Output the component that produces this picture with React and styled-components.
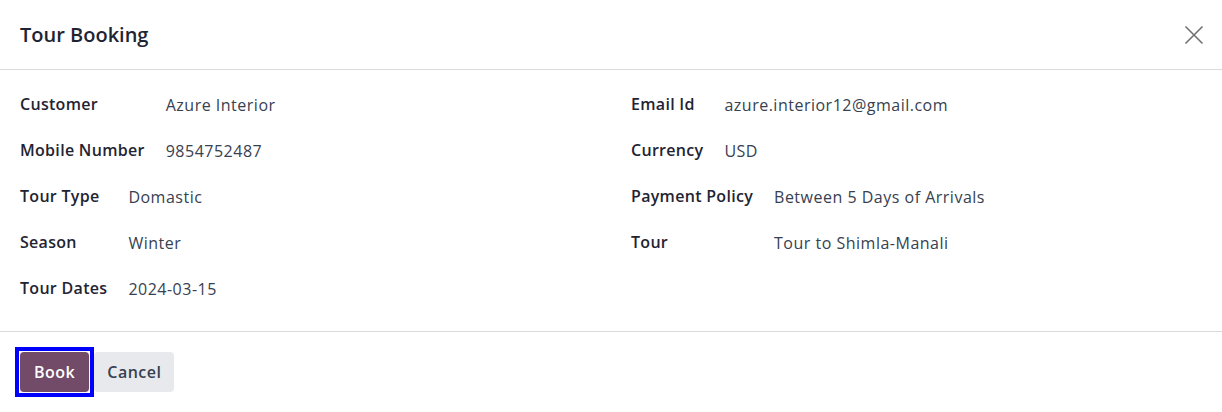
import React from "react";
import styled, { createGlobalStyle } from "styled-components";

const GlobalStyle = createGlobalStyle`
  html, body {
    margin: 0;
    padding: 0;
    background: #ffffff;
    font-family: "Open Sans", "Noto Sans", sans-serif;
  }
`;

const Dialog = styled.div`
  width: 1222px;
  height: 412px;
  background: #ffffff;
  display: flex;
  flex-direction: column;
  color: #111827;
`;

const Header = styled.div`
  height: 70px;
  box-sizing: border-box;
  padding: 0 16px 0 20px;
  display: flex;
  align-items: center;
  justify-content: space-between;
  border-bottom: 1px solid #d8dadd;
`;

const Title = styled.h4`
  margin: 0;
  font-size: 20px;
  font-weight: 600;
  color: #1f2433;
`;

const CloseBtn = styled.button`
  border: none;
  background: transparent;
  padding: 0;
  width: 24px;
  height: 24px;
  display: flex;
  align-items: center;
  justify-content: center;
  cursor: pointer;
`;

const Body = styled.div`
  flex: 1;
  display: grid;
  grid-template-columns: 1fr 1fr;
  column-gap: 20px;
  padding: 23px 0 0 20px;
  border-bottom: 1px solid #d8dadd;
`;

const Column = styled.div`
  display: flex;
  flex-direction: column;
`;

const Group = styled.div`
  display: grid;
  grid-template-columns: max-content 1fr;
  column-gap: 21px;
  grid-auto-rows: 46px;
`;

const Label = styled.div`
  font-size: 16px;
  font-weight: 600;
  letter-spacing: 0.3px;
  line-height: 22px;
  color: #1f2433;
`;

const Value = styled.div`
  font-size: 16px;
  letter-spacing: 0.5px;
  line-height: 22px;
  padding-top: 1px;
  color: #374151;
`;

const Footer = styled.div`
  height: 80px;
  box-sizing: border-box;
  padding: 0 15px;
  display: flex;
  align-items: center;
  gap: 0;
`;

const FocusRing = styled.span`
  display: inline-flex;
  border: 4px solid #0000ff;
  padding: 1px;
`;

const Button = styled.button`
  height: 40px;
  padding: 0 ${(p) => (p.$primary ? "14px" : "13px")};
  border: none;
  border-radius: 4px;
  font-family: inherit;
  font-size: 16px;
  font-weight: 600;
  letter-spacing: 0.5px;
  cursor: pointer;
  background: ${(p) => (p.$primary ? "#714b67" : "#e7e9ed")};
  color: ${(p) => (p.$primary ? "#ffffff" : "#374151")};
`;

const left = [
  [
    ["Customer", "Azure Interior"],
    ["Mobile Number", "9854752487"],
  ],
  [
    ["Tour Type", "Domastic"],
    ["Season", "Winter"],
    ["Tour Dates", "2024-03-15"],
  ],
];

const right = [
  [
    ["Email Id", "azure.interior12@gmail.com"],
    ["Currency", "USD"],
  ],
  [
    ["Payment Policy", "Between 5 Days of Arrivals"],
    ["Tour", "Tour to Shimla-Manali"],
  ],
];

function FieldColumn({ groups }) {
  return (
    <Column>
      {groups.map((rows, i) => (
        <Group key={i}>
          {rows.map(([label, value]) => (
            <React.Fragment key={label}>
              <Label>{label}</Label>
              <Value>{value}</Value>
            </React.Fragment>
          ))}
        </Group>
      ))}
    </Column>
  );
}

export default function App() {
  return (
    <>
      <GlobalStyle />
      <Dialog>
        <Header>
          <Title>Tour Booking</Title>
          <CloseBtn aria-label="Close">
            <svg width="20" height="20" viewBox="0 0 20 20">
              <path d="M1.5 1.5 L18.5 18.5 M18.5 1.5 L1.5 18.5" stroke="#707070" strokeWidth="1.6" />
            </svg>
          </CloseBtn>
        </Header>
        <Body>
          <FieldColumn groups={left} />
          <FieldColumn groups={right} />
        </Body>
        <Footer>
          <FocusRing>
            <Button $primary>Book</Button>
          </FocusRing>
          <Button>Cancel</Button>
        </Footer>
      </Dialog>
    </>
  );
}
